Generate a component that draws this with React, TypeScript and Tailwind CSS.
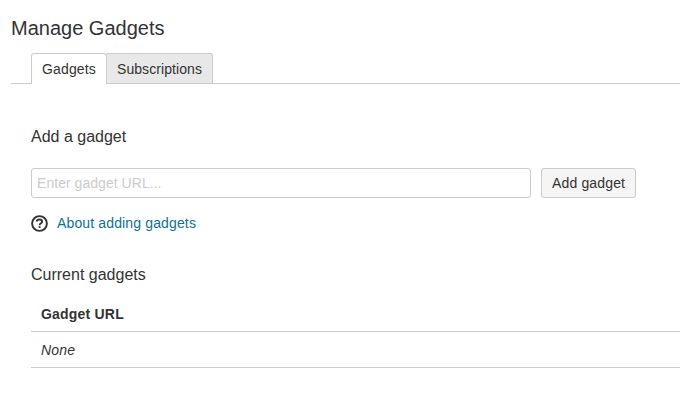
export default function App() {
  return (
    <main className="h-[400px] w-[680px] overflow-hidden bg-white pl-[11px] pt-[16px] font-['Liberation_Sans',Arial,sans-serif] text-[14px] leading-5 text-[#333]">
      <h1 className="h-[25px] text-[20px] leading-[25px]">Manage Gadgets</h1>
      <nav className="mt-[12px] flex h-[31px] border-b border-[#ccc] pl-5">
        <a className="h-[31px] w-[76px] rounded-t-[3px] border border-b-0 border-[#ccc] bg-white pl-[10px] pt-[5px] tracking-[0.15px]">Gadgets</a>
        <a className="h-[30px] w-[106px] rounded-tr-[3px] border border-b-0 border-l-0 border-[#ccc] bg-[#e8e8e8] pl-[10px] pt-[5px] tracking-[0.07px]">Subscriptions</a>
      </nav>
      <section className="pl-5">
        <h2 className="mt-[43px] text-[16px] leading-5">Add a gadget</h2>
        <form className="mt-[21px] flex gap-[10px]">
          <input className="h-[30px] w-[500px] rounded-[3px] border border-[#ccc] px-[5px] tracking-[0.04px] placeholder:text-[#ccc]" placeholder="Enter gadget URL..." />
          <button type="button" className="h-[30px] w-[95px] rounded-[3px] border border-[#ccc] bg-[#f5f5f5] pl-[10px] text-left tracking-[0.15px]">Add gadget</button>
        </form>
        <a className="mt-[15px] flex h-5 items-center tracking-[0.14px] text-[#0b7294]">
          <svg className="mr-[9px]" width="17" height="17" viewBox="0 0 17 17" fill="none" stroke="#333" strokeWidth="1.9">
            <circle cx="8.5" cy="8.5" r="7.4" />
            <path d="M5.8 6.5Q6 4.5 8.5 4.5Q11.1 4.5 11.1 6.5Q11.1 7.5 9.9 8.3Q8.6 9.1 8.6 10.2M8.6 11.2V13" />
          </svg>
          About adding gadgets
        </a>
        <h2 className="mt-[32px] text-[16px] leading-5">Current gadgets</h2>
        <table className="mt-[10px] w-full border-collapse text-left">
          <thead><tr className="h-[36px] border-b border-[#ccc]"><th className="p-0 pl-[10px] pt-[2px] tracking-[0.2px]">Gadget URL</th></tr></thead>
          <tbody><tr className="h-[36px] border-b border-[#ccc]"><td className="p-0 pl-[10px] pt-px italic tracking-[0.2px]">None</td></tr></tbody>
        </table>
      </section>
    </main>
  );
}
